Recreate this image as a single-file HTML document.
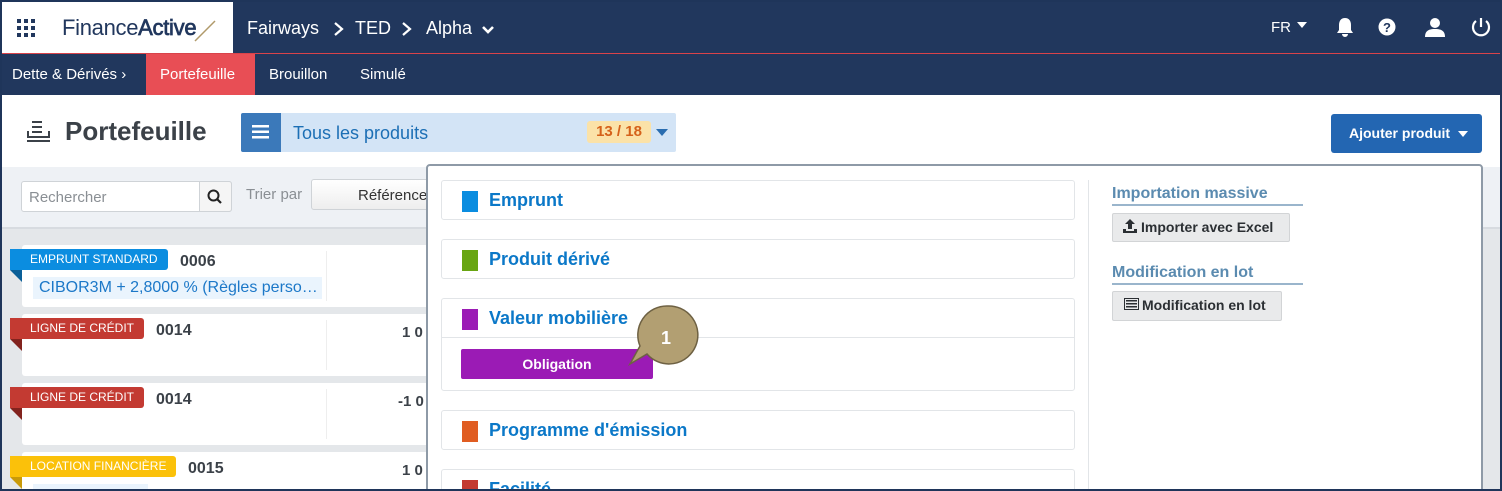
<!DOCTYPE html>
<html><head><meta charset="utf-8"><style>
*{box-sizing:border-box;margin:0;padding:0}
html{width:1502px;height:491px;overflow:hidden}
body{width:1502px;height:491px;overflow:hidden;font-family:"Liberation Sans",Arial,sans-serif;background:#e4e7ea;position:relative}
.abs{position:absolute}
.frame{position:absolute;left:0;top:0;width:1502px;height:491px;border:2px solid #1f355a;pointer-events:none;z-index:50}
.top{left:0;top:0;width:1502px;height:53px;background:#21375d}
.logo{left:2px;top:2px;width:231px;height:51px;background:#fff}
.redl{left:0;top:53px;width:1502px;height:1px;background:#d9434a}
.nav2{left:0;top:54px;width:1502px;height:41px;background:#21375d}
.w{color:#fff}
.card{background:#fff;border-radius:3px}
.tag{position:absolute;left:-12px;top:4px;height:21px;color:#fff;font-size:12px;line-height:21px;padding:0 10px 0 20px;border-radius:0 3px 3px 0}
.tag i{position:absolute;left:0;top:21px;border-left:12px solid transparent;border-top:12px solid #000}
.item{position:absolute;left:441px;width:634px;border:1px solid #e2e5e8;border-radius:3px;background:#fff}
.sq{position:absolute;left:20px;top:10px;width:16px;height:21px}
.it{position:absolute;left:47px;top:9px;font-size:18px;font-weight:bold;color:#0b78c8}
.gb{position:absolute;background:#e9eaeb;border:1px solid #d2d4d6;border-radius:2px;font-size:14px;font-weight:bold;color:#2b2f33;line-height:27px}
.sh{position:absolute;left:1112px;width:191px;border-bottom:2px solid #9ab5cc;font-size:16px;font-weight:bold;color:#5b8bb0;padding-bottom:1px}
</style></head><body>
<div class="abs top"></div>
<div class="abs logo"></div>
<svg class="abs" style="left:17px;top:19px" width="19" height="19"><g fill="#21375d"><rect x="0" y="0" width="4" height="4"/><rect x="7" y="0" width="4" height="4"/><rect x="14" y="0" width="4" height="4"/><rect x="0" y="7" width="4" height="4"/><rect x="7" y="7" width="4" height="4"/><rect x="14" y="7" width="4" height="4"/><rect x="0" y="14" width="4" height="4"/><rect x="7" y="14" width="4" height="4"/><rect x="14" y="14" width="4" height="4"/></g></svg>
<div class="abs" style="left:62px;top:15px;font-size:22px;color:#21375d;letter-spacing:-0.3px">Finance<span style="-webkit-text-stroke:0.7px #21375d">Active</span></div>
<svg class="abs" style="left:193px;top:19px" width="24" height="24"><line x1="2" y1="22" x2="22" y2="2" stroke="#b09a6a" stroke-width="1.5"/></svg>
<div class="abs w" style="left:247px;top:18px;font-size:18px">Fairways</div>
<div class="abs w" style="left:355px;top:18px;font-size:18px">TED</div>
<div class="abs w" style="left:426px;top:18px;font-size:18px">Alpha</div>
<svg class="abs" style="left:333px;top:21px" width="12" height="16"><path d="M2 2L9 8L2 14" stroke="#fff" stroke-width="2.2" fill="none"/></svg>
<svg class="abs" style="left:401px;top:21px" width="12" height="16"><path d="M2 2L9 8L2 14" stroke="#fff" stroke-width="2.2" fill="none"/></svg>
<svg class="abs" style="left:481px;top:25px" width="14" height="10"><path d="M2 2 L7 7 L12 2" stroke="#fff" stroke-width="2.6" fill="none"/></svg>
<div class="abs w" style="left:1271px;top:19px;font-size:15px">FR</div>
<svg class="abs" style="left:1297px;top:22px" width="10" height="6"><path d="M0 0H10L5 6Z" fill="#fff"/></svg>
<svg class="abs" style="left:1334px;top:16px" width="22" height="22"><path d="M11 2C7 2 5 5 5 9V14L3 17H19L17 14V9C17 5 15 2 11 2Z M8 18A3 3 0 0 0 14 18Z" fill="#fff"/></svg>
<svg class="abs" style="left:1378px;top:18px" width="18" height="18"><circle cx="9" cy="9" r="8.5" fill="#fff"/><text x="9" y="14" font-size="13" font-weight="bold" text-anchor="middle" fill="#21375d" font-family="Liberation Sans">?</text></svg>
<svg class="abs" style="left:1424px;top:16px" width="22" height="22"><circle cx="11" cy="7" r="5" fill="#fff"/><path d="M1 21C1 14 6 13 11 13C16 13 21 14 21 21Z" fill="#fff"/></svg>
<svg class="abs" style="left:1470px;top:16px" width="22" height="22"><path d="M6 5A8 8 0 1 0 16 5" stroke="#fff" stroke-width="2.2" fill="none"/><line x1="11" y1="2" x2="11" y2="11" stroke="#fff" stroke-width="2.2"/></svg>
<div class="abs redl"></div>
<div class="abs nav2"></div>
<div class="abs w" style="left:12px;top:66px;font-size:15px">Dette &amp; Dérivés ›</div>
<div class="abs" style="left:146px;top:54px;width:109px;height:41px;background:#e84e55"></div>
<div class="abs w" style="left:160px;top:66px;font-size:15px">Portefeuille</div>
<div class="abs w" style="left:269px;top:66px;font-size:15px">Brouillon</div>
<div class="abs w" style="left:360px;top:66px;font-size:15px">Simulé</div>
<div class="abs" style="left:0;top:95px;width:1502px;height:72px;background:#fff"></div>
<svg class="abs" style="left:27px;top:121px" width="24" height="22"><g fill="#3b4148"><rect x="5" y="0" width="10" height="2"/><rect x="5" y="5" width="10" height="2"/><rect x="5" y="10" width="10" height="2"/><rect x="0" y="15" width="23" height="2"/><rect x="0" y="10" width="2" height="7"/><rect x="21" y="10" width="2" height="7"/><rect x="0" y="19" width="23" height="2"/></g></svg>
<div class="abs" style="left:65px;top:116px;font-size:26px;font-weight:bold;color:#3b4148">Portefeuille</div>
<div class="abs" style="left:241px;top:113px;width:435px;height:39px;background:#d3e4f6;border-radius:2px"></div>
<div class="abs" style="left:241px;top:113px;width:40px;height:39px;background:#3b79ba;border-radius:2px 0 0 2px"></div>
<svg class="abs" style="left:252px;top:125px" width="17" height="14"><g fill="#fff"><rect y="0" width="17" height="2.5"/><rect y="5.5" width="17" height="2.5"/><rect y="11" width="17" height="2.5"/></g></svg>
<div class="abs" style="left:293px;top:123px;font-size:18px;color:#1c6fb5">Tous les produits</div>
<div class="abs" style="left:587px;top:121px;width:64px;height:22px;background:#fbe2a8;border-radius:3px;color:#d5611a;font-weight:bold;font-size:15px;text-align:center;line-height:22px">13 / 18</div>
<svg class="abs" style="left:656px;top:129px" width="12" height="7"><path d="M0 0H12L6 7Z" fill="#2a6db0"/></svg>
<div class="abs" style="left:1331px;top:114px;width:151px;height:39px;background:#2366b2;border-radius:3px;color:#fff;font-weight:bold;font-size:14px;line-height:39px;padding-left:18px">Ajouter produit</div>
<svg class="abs" style="left:1458px;top:131px" width="10" height="6"><path d="M0 0H10L5 6Z" fill="#fff"/></svg>
<div class="abs" style="left:0;top:167px;width:1502px;height:62px;background:#eef1f5;border-bottom:2px solid #d7dbe0"></div>
<div class="abs" style="left:21px;top:181px;width:211px;height:31px;background:#fff;border:1px solid #cfd3d7;border-radius:3px"></div>
<div class="abs" style="left:199px;top:181px;width:33px;height:31px;background:#f5f5f5;border:1px solid #cfd3d7;border-radius:0 3px 3px 0"></div>
<svg class="abs" style="left:207px;top:189px" width="16" height="16"><circle cx="6.5" cy="6.5" r="5" stroke="#222" stroke-width="2" fill="none"/><line x1="10" y1="10" x2="14" y2="14" stroke="#222" stroke-width="2.2"/></svg>
<div class="abs" style="left:29px;top:189px;font-size:15px;color:#8a8f94">Rechercher</div>
<div class="abs" style="left:246px;top:186px;font-size:15px;color:#8a8f94">Trier par</div>
<div class="abs" style="left:311px;top:179px;width:130px;height:31px;background:linear-gradient(#fff,#eee);border:1px solid #cfd3d7;border-radius:3px"></div>
<div class="abs" style="left:358px;top:187px;font-size:15px;color:#333">Référence</div>

<div class="abs card" style="left:22px;top:245px;width:420px;height:62px"><div class="tag" style="background:#0b8de0"><i style="border-top-color:#0a5f98"></i>EMPRUNT STANDARD</div><div class="abs" style="left:158px;top:8px;font-size:16px;font-weight:bold;color:#3b4148">0006</div><div class="abs" style="left:11px;top:32px;width:289px;height:22px;background:#eaf4fd;color:#1c78c8;font-size:16px;line-height:22px;padding-left:6px">CIBOR3M + 2,8000 % (Règles perso…</div><div class="abs" style="left:304px;top:6px;width:1px;height:50px;background:#eee"></div></div>
<div class="abs card" style="left:22px;top:314px;width:420px;height:62px"><div class="tag" style="background:#c33a32"><i style="border-top-color:#82231e"></i>LIGNE DE CRÉDIT</div><div class="abs" style="left:134px;top:8px;font-size:16px;font-weight:bold;color:#3b4148">0014</div><div class="abs" style="left:380px;top:10px;font-size:15px;font-weight:bold;color:#3b4148">1 0</div><div class="abs" style="left:304px;top:6px;width:1px;height:50px;background:#eee"></div></div>
<div class="abs card" style="left:22px;top:383px;width:420px;height:62px"><div class="tag" style="background:#c33a32"><i style="border-top-color:#82231e"></i>LIGNE DE CRÉDIT</div><div class="abs" style="left:134px;top:8px;font-size:16px;font-weight:bold;color:#3b4148">0014</div><div class="abs" style="left:376px;top:10px;font-size:15px;font-weight:bold;color:#3b4148">-1 0</div><div class="abs" style="left:304px;top:6px;width:1px;height:50px;background:#eee"></div></div>
<div class="abs card" style="left:22px;top:452px;width:420px;height:62px"><div class="tag" style="background:#fbc10a"><i style="border-top-color:#c99a08"></i>LOCATION FINANCIÈRE</div><div class="abs" style="left:166px;top:8px;font-size:16px;font-weight:bold;color:#3b4148">0015</div><div class="abs" style="left:380px;top:10px;font-size:15px;font-weight:bold;color:#3b4148">1 0</div><div class="abs" style="left:11px;top:32px;width:115px;height:22px;background:#eaf4fd"></div></div>

<div class="abs" style="left:426px;top:164px;width:1057px;height:340px;background:#fff;border:2px solid #8e9aa7;border-radius:4px"></div>
<div class="item" style="top:180px;height:40px"><div class="sq" style="background:#0b8de0"></div><div class="it">Emprunt</div></div>
<div class="item" style="top:239px;height:40px"><div class="sq" style="background:#68a512"></div><div class="it">Produit dérivé</div></div>
<div class="item" style="top:298px;height:93px"><div class="sq" style="background:#9b1bb5"></div><div class="it">Valeur mobilière</div><div class="abs" style="left:0;top:38px;width:632px;height:1px;background:#e2e5e8"></div><div class="abs" style="left:19px;top:50px;width:192px;height:30px;background:#9b1bb5;border-radius:2px;color:#fff;font-weight:bold;font-size:14px;text-align:center;line-height:30px">Obligation</div></div>
<div class="item" style="top:410px;height:40px"><div class="sq" style="background:#e05d22"></div><div class="it">Programme d'émission</div></div>
<div class="item" style="top:469px;height:40px"><div class="sq" style="background:#c33a32"></div><div class="it">Facilité</div></div>
<svg class="abs" style="left:620px;top:304px" width="80" height="66"><path d="M47 2A29 29 0 1 1 27 50L10 60L20 42A29 29 0 0 1 47 2Z" fill="#b29f72" stroke="#6e6143" stroke-width="1.5"/><text x="46" y="40" font-size="18" font-weight="bold" fill="#fff" text-anchor="middle" font-family="Liberation Sans">1</text></svg>
<div class="abs" style="left:1088px;top:180px;width:1px;height:311px;background:#e2e5e8"></div>
<div class="sh" style="top:185px">Importation massive</div>
<div class="gb" style="left:1112px;top:213px;width:178px;height:29px;padding-left:28px">Importer avec Excel</div>
<svg class="abs" style="left:1123px;top:219px" width="14" height="14"><path d="M7 0L12 5H9V10H5V5H2Z M0 10H3V12H11V10H14V14H0Z" fill="#2b2f33"/></svg>
<div class="sh" style="top:264px">Modification en lot</div>
<div class="gb" style="left:1112px;top:291px;width:170px;height:30px;padding-left:29px">Modification en lot</div>
<svg class="abs" style="left:1124px;top:298px" width="15" height="12"><rect x="0.5" y="0.5" width="14" height="11" fill="none" stroke="#2b2f33"/><g fill="#2b2f33"><rect x="2" y="2" width="11" height="1.5"/><rect x="2" y="5" width="11" height="1.5"/><rect x="2" y="8" width="11" height="1.5"/></g></svg>
<div class="frame"></div>
</body></html>
